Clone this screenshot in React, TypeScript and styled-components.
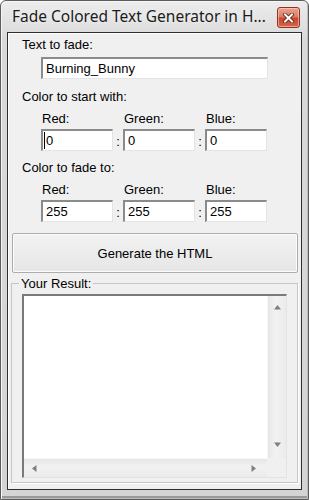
import React from 'react';
import styled, {createGlobalStyle} from 'styled-components';

const GlobalStyle = createGlobalStyle`
  html, body {
    margin: 0;
    padding: 0;
    background: #ffffff;
  }
`;

const Window = styled.div`
  box-sizing: border-box;
  width: 309px;
  height: 500px;
  display: flex;
  flex-direction: column;
  border: 1px solid #5c5c5c;
  border-radius: 6px 6px 0 0;
  background: linear-gradient(#ececec, #d9d9d9 40px, #d4d4d4);
  box-shadow: inset 1px 1px 0 #f6f6f6, inset -1px -1px 0 #bdbdbd, inset 0 -3px 0 #9a9a9a;
`;

const TitleBar = styled.div`
  height: 31px;
  flex: none;
  display: flex;
  align-items: flex-start;
  gap: 4px;
  padding: 0 8px 0 11px;
`;

const Title = styled.div`
  flex: 1;
  padding-top: 5px;
  font-family: 'Noto Sans', 'DejaVu Sans', sans-serif;
  font-size: 15.5px;
  line-height: 21px;
  color: #1b1b1b;
  white-space: nowrap;
  overflow: hidden;
  text-shadow: 0 0 6px rgba(255, 255, 255, 0.9);
`;

const CloseButton = styled.div`
  box-sizing: border-box;
  flex: none;
  width: 23px;
  height: 21px;
  margin-top: 6px;
  display: flex;
  align-items: center;
  justify-content: center;
  border: 1px solid #8c3324;
  border-radius: 3px;
  background: linear-gradient(#eba593 0%, #dd7a63 45%, #c8472e 55%, #d8654a 100%);
  box-shadow: inset 0 0 0 1px rgba(255, 220, 210, 0.55);
`;

const Client = styled.div`
  flex: 1;
  min-height: 0;
  margin: 0 6px 9px 6px;
  display: flex;
  flex-direction: column;
  border: 1px solid #2e2e2e;
  background: #f0f0f0;
  box-shadow: inset 1px 1px 0 #ffffff;
  padding: 4px 0 6px 0;
  font-family: 'Liberation Sans', Arial, sans-serif;
  font-size: 13px;
  line-height: 15px;
  color: #000;
`;

const Heading = styled.div`
  padding-left: 14px;
  height: 15px;
`;

const TextField = styled.input<{$caret?: boolean}>`
  box-sizing: border-box;
  display: block;
  height: 22px;
  width: 100%;
  margin: 0;
  padding: 0 2px 0 3px;
  border-style: solid;
  border-width: 2px 1px 1px 2px;
  border-color: #8b8b8b #e4e4e4 #e4e4e4 #8b8b8b;
  background: ${p => (p.$caret ? 'linear-gradient(#000, #000) no-repeat 1px 1px / 1px 17px, #ffffff' : '#ffffff')};
  font-family: 'Liberation Sans', Arial, sans-serif;
  font-size: 13px;
  color: #000;
  outline: none;
`;

const MainField = styled.div`
  margin: 5px 0 10px 33px;
  width: 227px;
`;

const ColorSection = styled.div`
  margin-bottom: 9px;
`;

const ColorGrid = styled.div`
  display: grid;
  grid-template-columns: 72px 10px 72px 10px 62px;
  grid-template-rows: 15px 22px;
  row-gap: 3px;
  margin: 7px 0 0 33px;
`;

const SubLabel = styled.div`
  padding-left: 1px;
`;

const Colon = styled.div`
  display: flex;
  align-items: center;
  justify-content: center;
  padding-top: 2px;
`;

const GenerateButton = styled.button`
  box-sizing: border-box;
  flex: none;
  height: 40px;
  margin: 2px 3px 3px 4px;
  border: 1px solid #adadad;
  border-radius: 2px;
  background: linear-gradient(#f2f2f2, #e6e6e6);
  box-shadow: inset 0 0 0 1px #fbfbfb;
  font-family: 'Liberation Sans', Arial, sans-serif;
  font-size: 13px;
  color: #000;
  padding: 0;
`;

const GroupBox = styled.fieldset`
  flex: 1;
  min-height: 0;
  min-width: 0;
  margin: 0 3px;
  padding: 3px 10px 4px 10px;
  display: flex;
  flex-direction: column;
  border: 1px solid #c6c6c6;
  box-shadow: 1px 1px 0 #ffffff;
`;

const GroupLegend = styled.legend`
  padding: 0 2px;
  margin-left: -3px;
  line-height: 15px;
`;

const ResultBox = styled.div`
  flex: 1;
  min-height: 0;
  display: grid;
  grid-template-columns: 1fr 19px;
  grid-template-rows: 1fr 19px;
  border-style: solid;
  border-width: 2px 1px 1px 2px;
  border-color: #7a7a7a #e3e3e3 #e3e3e3 #7a7a7a;
  background: #ffffff;
`;

const ResultText = styled.div`
  background: #ffffff;
`;

const VScroll = styled.div`
  display: flex;
  flex-direction: column;
  justify-content: space-between;
  align-items: center;
  background: linear-gradient(90deg, #e6e6e6, #f2f2f2 40%, #ebebeb);
  border-left: 1px solid #f7f7f7;
  padding: 7px 0 9px 0;
`;

const HScroll = styled.div`
  display: flex;
  justify-content: space-between;
  align-items: center;
  background: linear-gradient(#e6e6e6, #f2f2f2 40%, #ebebeb);
  border-top: 1px solid #f7f7f7;
  padding: 0 9px 0 6px;
`;

const Corner = styled.div`
  background: #f0f0f0;
`;

const Arrow = ({dir}: {dir: 'up' | 'down' | 'left' | 'right'}) => {
  const rotate = {up: 0, right: 90, down: 180, left: 270}[dir];
  return (
    <svg width="9" height="9" viewBox="0 0 9 9" style={{transform: `rotate(${rotate}deg)`}}>
      <path d="M4.5 2 L8 6.5 L1 6.5 Z" fill="#7f7f7f" />
    </svg>
  );
};

const ColorInputs = ({label, values, caret}: {label: string; values: string[]; caret?: boolean}) => (
  <ColorSection>
    <Heading>{label}</Heading>
    <ColorGrid>
      <SubLabel>Red:</SubLabel>
      <div />
      <SubLabel>Green:</SubLabel>
      <div />
      <SubLabel>Blue:</SubLabel>
      <TextField defaultValue={values[0]} $caret={caret} />
      <Colon>:</Colon>
      <TextField defaultValue={values[1]} />
      <Colon>:</Colon>
      <TextField defaultValue={values[2]} />
    </ColorGrid>
  </ColorSection>
);

export default function App() {
  return (
    <>
      <GlobalStyle />
      <Window>
        <TitleBar>
          <Title>Fade Colored Text Generator in H...</Title>
          <CloseButton>
            <svg width="11" height="10" viewBox="0 0 11 10">
              <path d="M2 1.5 L9 8.5 M9 1.5 L2 8.5" stroke="#5a1a10" strokeWidth="3.6" strokeLinecap="square" />
              <path d="M2 1.5 L9 8.5 M9 1.5 L2 8.5" stroke="#ffffff" strokeWidth="2" strokeLinecap="square" />
            </svg>
          </CloseButton>
        </TitleBar>
        <Client>
          <Heading>Text to fade:</Heading>
          <MainField>
            <TextField defaultValue="Burning_Bunny" />
          </MainField>
          <ColorInputs label="Color to start with:" values={['0', '0', '0']} caret />
          <ColorInputs label="Color to fade to:" values={['255', '255', '255']} />
          <GenerateButton>Generate the HTML</GenerateButton>
          <GroupBox>
            <GroupLegend>Your Result:</GroupLegend>
            <ResultBox>
              <ResultText />
              <VScroll>
                <Arrow dir="up" />
                <Arrow dir="down" />
              </VScroll>
              <HScroll>
                <Arrow dir="left" />
                <Arrow dir="right" />
              </HScroll>
              <Corner />
            </ResultBox>
          </GroupBox>
        </Client>
      </Window>
    </>
  );
}
